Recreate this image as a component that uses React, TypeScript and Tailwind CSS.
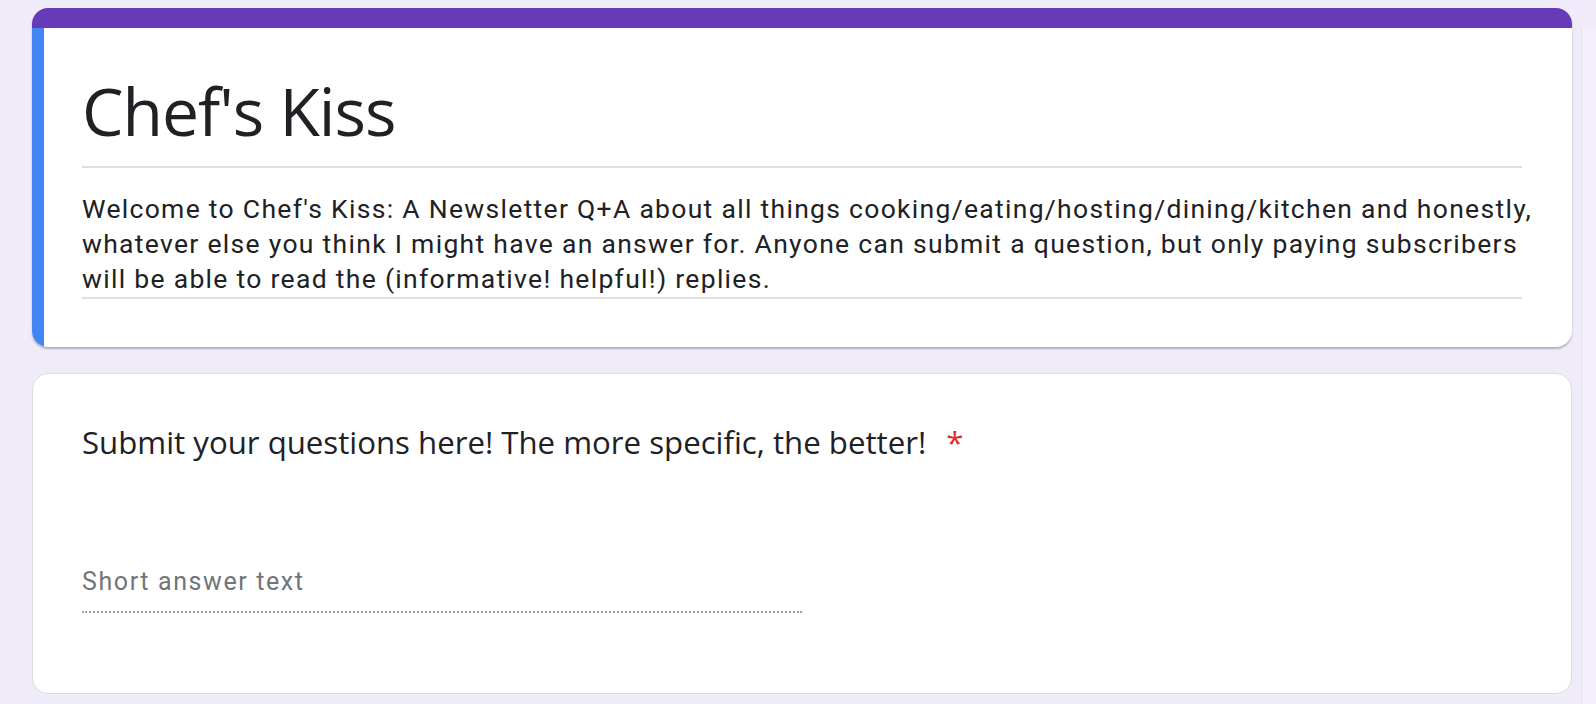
import React from "react";

export default function App() {
  return (
    <div className="relative w-[1596px] h-[704px] overflow-hidden bg-[#f0ebf8] pt-[8px]">
      {/* right edge floating strip */}
      <div className="absolute left-[1581px] top-[28px] w-[40px] h-[700px] bg-[#f3effa] border-l border-[#e4def0]" />

      <div className="ml-[32px] w-[1540px] rounded-[16px] overflow-hidden bg-white shadow-[0_2px_2px_rgba(0,0,0,0.25)]">
        <div className="h-[20px] bg-[#673ab7]" />
        <div className="flex">
          <div className="w-[12px] bg-[#4285f4] shrink-0" />
          <div className="flex-1 min-w-0 pl-[38px] pr-[50px] pt-[42px] pb-[48px]">
            <div
              className="text-[66px] leading-[80px] tracking-[-1px] text-[#202124] pb-[16px] border-b-[2px] border-[#e0e0e0]"
              style={{ fontFamily: '"Open Sans", sans-serif' }}
            >
              Chef's Kiss
            </div>
            <div
              className="mt-[23px] text-[26.5px] leading-[35px] tracking-[1.3px] text-[#202124] pb-[1px] border-b-[2px] border-[#e0e0e0] whitespace-nowrap"
              style={{ fontFamily: 'Roboto, sans-serif' }}
            >
              Welcome to Chef's Kiss: A Newsletter Q+A about all things cooking/eating/hosting/dining/kitchen and honestly,
              <br />
              whatever else you think I might have an answer for. Anyone can submit a question, but only paying subscribers
              <br />
              will be able to read the (informative! helpful!) replies.
            </div>
          </div>
        </div>
      </div>

      <div className="ml-[32px] mt-[26px] w-[1540px] h-[321px] rounded-[16px] bg-white border border-[#dadce0] pl-[49px] pt-[48px]">
        <div
          className="text-[31.2px] leading-[40px] text-[#202124] flex items-start"
          style={{ fontFamily: '"Open Sans", sans-serif' }}
        >
          <span>Submit your questions here! The more specific, the better!</span>
          <span className="ml-[20px] text-[#d93025]">*</span>
        </div>
        <div className="mt-[104px] w-[720px]">
          <div
            className="text-[25px] leading-[32px] tracking-[1.6px] text-[#70757a]"
            style={{ fontFamily: 'Roboto, sans-serif' }}
          >
            Short answer text
          </div>
          <div className="mt-[13px] border-b-[2px] border-dotted border-[#9aa0a6]" />
        </div>
      </div>
    </div>
  );
}
